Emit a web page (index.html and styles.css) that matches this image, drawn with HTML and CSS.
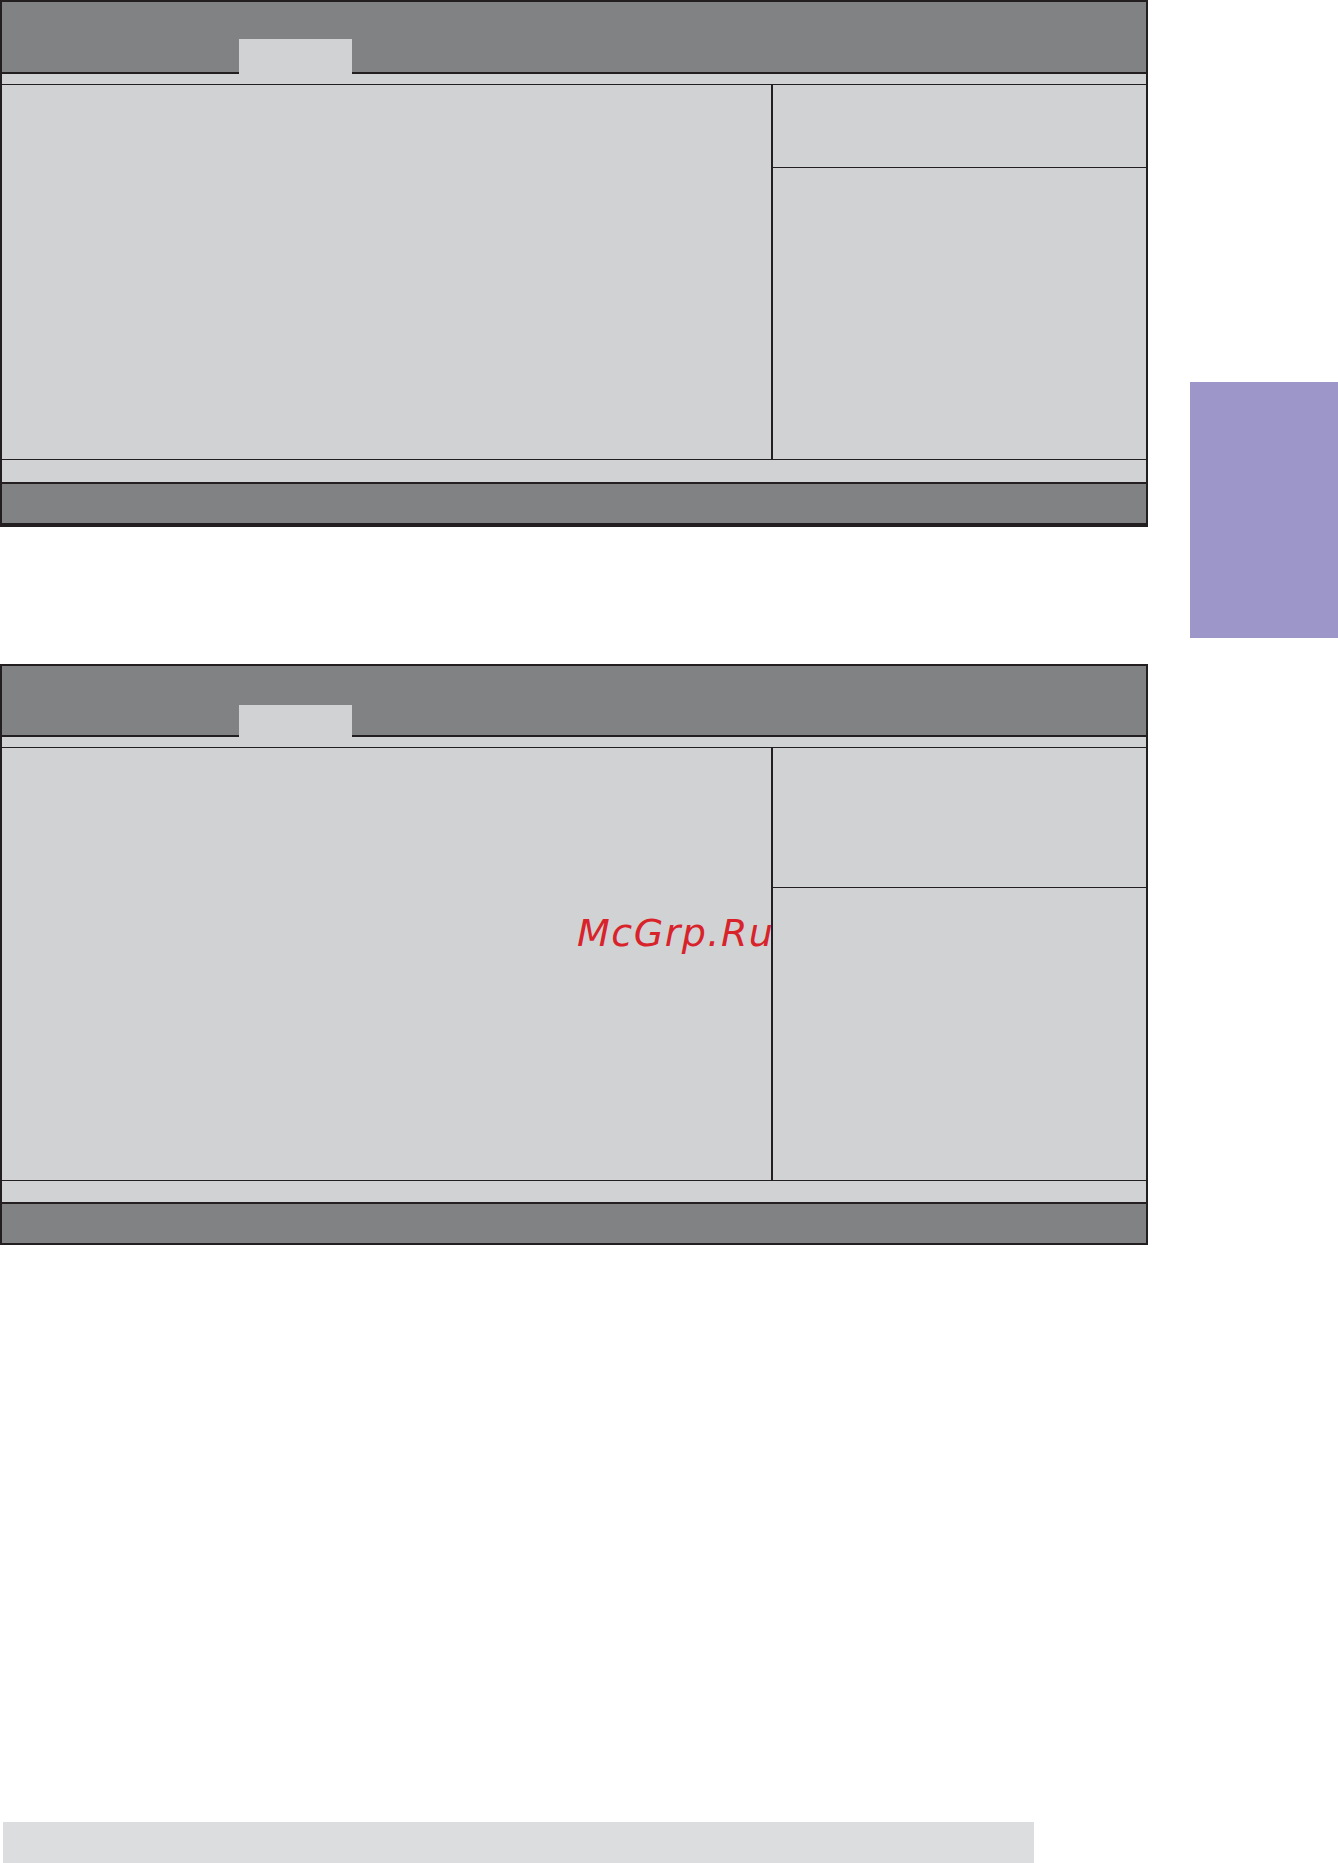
FILE: index.html
```html
<!DOCTYPE html>
<html>
<head>
<meta charset="utf-8">
<link rel="stylesheet" href="styles.css">
</head>
<body>
<div class="page">
  <div class="column">
    <div class="panel panel-a">
      <div class="head"><div class="tab"></div></div>
      <div class="strip"></div>
      <div class="body">
        <div class="left"></div>
        <div class="right">
          <div class="right-top"></div>
          <div class="right-bottom"></div>
        </div>
      </div>
      <div class="foot-strip"></div>
      <div class="foot"></div>
    </div>
    <div class="panel panel-b">
      <div class="head"><div class="tab"></div></div>
      <div class="strip"></div>
      <div class="body">
        <div class="left"><span class="mark">McGrp.Ru</span></div>
        <div class="right">
          <div class="right-top"></div>
          <div class="right-bottom"></div>
        </div>
      </div>
      <div class="foot-strip"></div>
      <div class="foot"></div>
    </div>
    <div class="bottom-bar"></div>
  </div>
  <div class="side-tab"></div>
</div>
</body>
</html>
```

FILE: styles.css
```css
html, body {
  margin: 0;
  padding: 0;
  background: #ffffff;
}
body {
  font-family: "DejaVu Sans", sans-serif;
}
.page {
  width: 1338px;
  height: 1863px;
  display: flex;
  gap: 42px;
  overflow: hidden;
}
.column {
  width: 1148px;
  display: flex;
  flex-direction: column;
}
.panel {
  width: 1148px;
  box-sizing: border-box;
  border: 2px solid #231f20;
  background: #d1d2d4;
}
.panel-a {
  border-bottom-width: 4px;
}
.panel-b {
  margin-top: 137px;
}
.head {
  background: #818284;
  border-bottom: 2px solid #231f20;
  display: flex;
  align-items: flex-end;
  padding-left: 237px;
}
.panel-a .head { height: 70px; }
.panel-b .head { height: 69px; }
.tab {
  width: 113px;
  background: #d1d2d4;
  margin-bottom: -2px;
}
.panel-a .tab { height: 35px; }
.panel-b .tab { height: 32px; }
.strip {
  height: 10px;
  border-bottom: 1px solid #231f20;
}
.body {
  display: flex;
}
.panel-a .body { height: 374px; }
.panel-b .body { height: 432px; }
.left {
  width: 769px;
  border-right: 2px solid #231f20;
  position: relative;
  overflow: hidden;
}
.right {
  flex: 1;
  display: flex;
  flex-direction: column;
}
.right-top {
  border-bottom: 1px solid #231f20;
}
.panel-a .right-top { height: 82px; }
.panel-b .right-top { height: 139px; }
.right-bottom {
  flex: 1;
}
.foot-strip {
  border-top: 1px solid #231f20;
  border-bottom: 2px solid #231f20;
}
.panel-a .foot-strip { height: 22px; }
.panel-b .foot-strip { height: 21px; }
.foot {
  background: #818284;
  height: 39px;
}
.mark {
  position: absolute;
  left: 575px;
  top: 166px;
  font-family: "DejaVu Sans", sans-serif;
  font-style: italic;
  font-size: 38px;
  line-height: 38px;
  letter-spacing: 1.5px;
  color: #d9232b;
  white-space: nowrap;
}
.bottom-bar {
  margin-top: 577px;
  margin-left: 3px;
  width: 1031px;
  height: 41px;
  background: #dcdddf;
}
.side-tab {
  margin-top: 382px;
  width: 148px;
  height: 256px;
  background: #9d97c9;
}
```
